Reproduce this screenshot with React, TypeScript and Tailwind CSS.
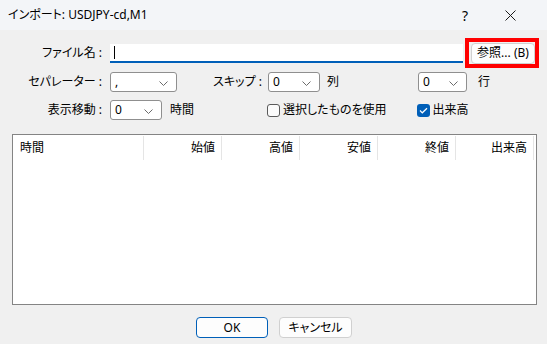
const font = "font-['Noto_Sans','Noto_Sans_CJK_JP',sans-serif] [font-feature-settings:'palt']";

function Chevron() {
  return (
    <svg width="9" height="5" viewBox="0 0 9 5" className="absolute right-[8px] top-[8px]">
      <path d="M0.5 0.5 L4.5 4.5 L8.5 0.5" fill="none" stroke="#6b6b6b" strokeWidth="1" />
    </svg>
  );
}

function Select({ w, value }: { w: string; value: string }) {
  return (
    <div className={`relative h-[20px] ${w} bg-white border border-[#8f8f8f] rounded-[3px] pl-[4px] text-[12px] leading-[18px] text-black`}>
      {value}
      <Chevron />
    </div>
  );
}

const cols = ["始値", "高値", "安値", "終値", "出来高"];

export default function App() {
  return (
    <div className={`w-[547px] h-[344px] bg-[#f0f0f0] flex flex-col text-[12px] text-black ${font}`}>
      {/* title bar */}
      <div className="h-[30px] bg-[#f3f5f8] flex items-center pl-[8px]">
        <span className="text-[12px]">インポート: USDJPY-cd,M1</span>
        <span className="ml-auto w-[10px] text-center text-[14px] mr-[35px]">?</span>
        <svg width="11" height="11" viewBox="0 0 11 11" className="mr-[31px]">
          <path d="M0.5 0.5 L10.5 10.5 M10.5 0.5 L0.5 10.5" stroke="#1a1a1a" strokeWidth="1" />
        </svg>
      </div>

      {/* file row */}
      <div className="mt-[8px] h-[30px] flex items-center">
        <div className="w-[102px] text-right">ファイル名 :</div>
        <div className="ml-[8px] w-[353px] h-[19px] bg-white border-b-2 border-[#005fb8] flex items-center pl-[4px]">
          <div className="w-px h-[13px] bg-black" />
        </div>
        <div className="ml-[2px] w-[74px] h-[30px] border-[4px] border-[#ff0000] flex items-center pl-[2px]">
          <div className="w-[64px] h-[21px] bg-[#fdfdfd] border border-[#d0d0d0] rounded-[4px] flex items-center justify-center text-[12px]">
            参照... (B)
          </div>
        </div>
      </div>

      {/* separator row */}
      <div className="mt-[4px] h-[20px] flex items-center">
        <div className="w-[102px] text-right">セパレーター :</div>
        <div className="ml-[8px]"><Select w="w-[67px]" value="," /></div>
        <div className="ml-[35px] w-[50px] text-right whitespace-nowrap">スキップ :</div>
        <div className="ml-[6px]"><Select w="w-[52px]" value="0" /></div>
        <div className="ml-[7px]">列</div>
        <div className="ml-[79px]"><Select w="w-[49px]" value="0" /></div>
        <div className="ml-[11px]">行</div>
      </div>

      {/* shift row */}
      <div className="mt-[8px] h-[20px] flex items-center">
        <div className="w-[102px] text-right">表示移動 :</div>
        <div className="ml-[8px]"><Select w="w-[52px]" value="0" /></div>
        <div className="ml-[8px]">時間</div>
        <div className="ml-[73px] w-[13px] h-[13px] border border-[#5a5a5a] rounded-[3px] bg-[#fbfbfb]" />
        <div className="ml-[3px]">選択したものを使用</div>
        <div className="ml-[30px] w-[13px] h-[13px] rounded-[3px] bg-[#005fb8] flex items-center justify-center">
          <svg width="9" height="7" viewBox="0 0 9 7">
            <path d="M1 3.5 L3.3 5.8 L8 1.2" fill="none" stroke="white" strokeWidth="1.2" />
          </svg>
        </div>
        <div className="ml-[3px]">出来高</div>
      </div>

      {/* table */}
      <div className="mt-[14px] ml-[12px] w-[525px] h-[171px] bg-white border border-[#848484]">
        <div className="h-[26px] flex">
          <div className="w-[131px] pl-[7px] flex items-center border-r border-[#e5e5e5] my-[1px]">時間</div>
          {cols.map((c) => (
            <div key={c} className="w-[78px] pr-[6px] flex items-center justify-end border-r border-[#e5e5e5] my-[1px]">
              {c}
            </div>
          ))}
        </div>
      </div>

      {/* buttons */}
      <div className="mt-[12px] flex justify-center gap-[11px] pl-[1px]">
        <div className="w-[72px] h-[21px] bg-[#fdfdfd] border border-[#005fb8] rounded-[4px] flex items-center justify-center">
          OK
        </div>
        <div className="w-[73px] h-[21px] bg-[#fdfdfd] border border-[#d0d0d0] rounded-[4px] flex items-center justify-center">
          キャンセル
        </div>
      </div>
    </div>
  );
}
